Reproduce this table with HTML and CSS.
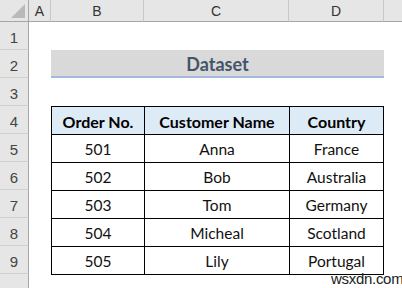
FILE: index.html
```html
<!DOCTYPE html>
<html>
<head>
<meta charset="utf-8">
<link rel="stylesheet" href="styles.css">
</head>
<body>
<div class="sheet">
  <div class="corner"><span class="tri"></span></div>
  <div class="ch">A</div>
  <div class="ch">B</div>
  <div class="ch">C</div>
  <div class="ch">D</div>
  <div class="ch last"></div>

  <div class="rh r1">1</div>
  <div class="rh r2">2</div>
  <div class="rh r3">3</div>
  <div class="rh r4">4</div>
  <div class="rh r5">5</div>
  <div class="rh r6">6</div>
  <div class="rh r7">7</div>
  <div class="rh r8">8</div>
  <div class="rh r9">9</div>
  <div class="rh r10"></div>

  <div class="banner">Dataset</div>

  <div class="tbl">
    <div class="cell head">Order No.</div>
    <div class="cell head">Customer Name</div>
    <div class="cell head">Country</div>
    <div class="cell">501</div><div class="cell">Anna</div><div class="cell">France</div>
    <div class="cell">502</div><div class="cell">Bob</div><div class="cell">Australia</div>
    <div class="cell">503</div><div class="cell">Tom</div><div class="cell">Germany</div>
    <div class="cell">504</div><div class="cell">Micheal</div><div class="cell">Scotland</div>
    <div class="cell">505</div><div class="cell">Lily</div><div class="cell">Portugal</div>
  </div>
</div>
<div class="mark">wsxdn.com</div>
</body>
</html>
```

FILE: styles.css
```css
html, body {
  margin: 0;
  padding: 0;
  background: #ffffff;
  width: 402px;
  height: 288px;
  overflow: hidden;
  position: relative;
}
.sheet {
  display: grid;
  grid-template-columns: 29px 22px 93px 145px 95px 1fr;
  grid-template-rows: 22px repeat(10, 28px);
  font-family: "Lato", "Liberation Sans", sans-serif;
}
.corner {
  background: #e6e6e6;
  border-right: 1px solid #a6a6a6;
  border-bottom: 1px solid #a6a6a6;
  box-sizing: border-box;
  position: relative;
}
.tri {
  position: absolute;
  right: 3px;
  bottom: 3px;
  width: 0;
  height: 0;
  border-left: 14px solid transparent;
  border-bottom: 14px solid #b9b9b9;
}
.ch {
  background: #e6e6e6;
  border-right: 1px solid #c8c8c8;
  border-bottom: 1px solid #a6a6a6;
  box-sizing: border-box;
  display: flex;
  align-items: center;
  justify-content: center;
  font-family: "Liberation Sans", sans-serif;
  font-size: 14px;
  color: #333;
}
.ch.last { border-right: none; }
.rh {
  grid-column: 1;
  background: #e6e6e6;
  border-right: 1px solid #a6a6a6;
  border-bottom: 1px solid #d0d0d0;
  box-sizing: border-box;
  display: flex;
  align-items: flex-end;
  justify-content: center;
  padding-bottom: 3px;
  font-family: "Liberation Sans", sans-serif;
  font-size: 15px;
  color: #444;
}
.banner {
  grid-column: 3 / 6;
  grid-row: 3;
  background: #d9d9d9;
  border-bottom: 2px solid #a4b8de;
  box-sizing: border-box;
  display: flex;
  align-items: center;
  justify-content: center;
  font-family: "Lato", sans-serif;
  font-weight: 700;
  font-size: 18px;
  color: #44546a;
  padding-top: 2px;
}
.tbl {
  grid-column: 3 / 6;
  grid-row: 5 / 11;
  align-self: start;
  display: grid;
  grid-template-columns: 93px 145px 94px;
  grid-auto-rows: 28px;
  border-left: 1px solid #000;
  border-top: 1px solid #000;
}
.cell {
  box-sizing: border-box;
  border-right: 1px solid #000;
  border-bottom: 1px solid #000;
  display: flex;
  align-items: center;
  justify-content: center;
  font-size: 15.5px;
  color: #111;
  padding-top: 1px;
}
.cell.head {
  background: #ddebf7;
  font-weight: 700;
  font-size: 16px;
  color: #000;
}
.mark {
  position: absolute;
  left: 331px;
  top: 270px;
  font-family: "Liberation Sans", sans-serif;
  font-size: 15px;
  line-height: 17px;
  color: #222;
  letter-spacing: -0.3px;
}
```
